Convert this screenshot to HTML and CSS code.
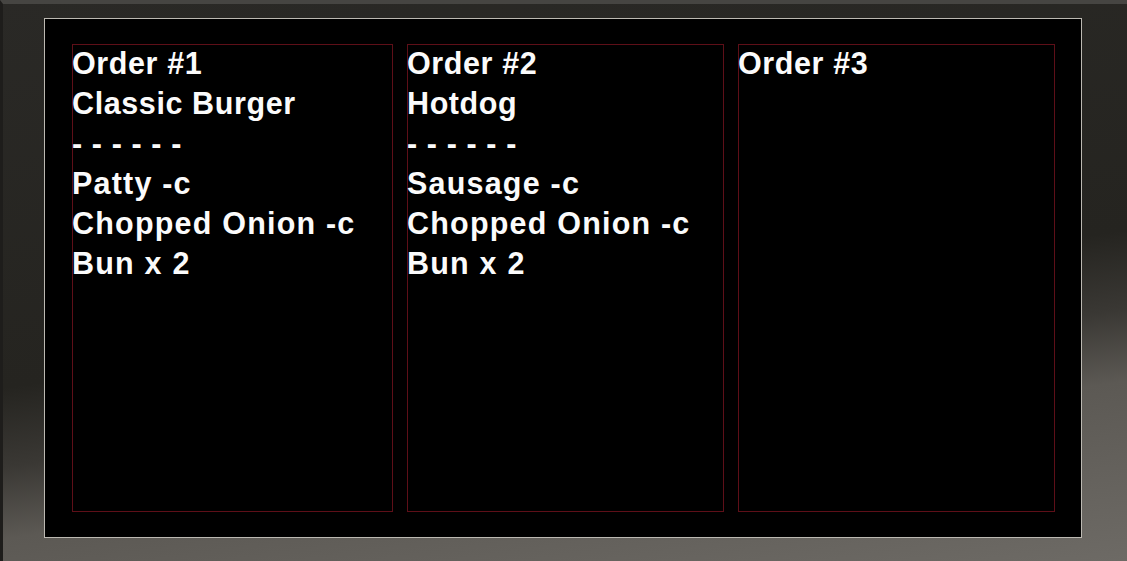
FILE: index.html
```html
<!DOCTYPE html>
<html>
<head>
<meta charset="utf-8">
<link rel="stylesheet" href="styles.css">
</head>
<body>
<div class="bezel">
  <div class="screen">
    <div class="order">
      <div class="line">Order #1</div>
      <div class="line">Classic Burger</div>
      <div class="line">- - - - - -</div>
      <div class="line item">Patty -c</div>
      <div class="line item">Chopped Onion -c</div>
      <div class="line item">Bun x 2</div>
    </div>
    <div class="order">
      <div class="line">Order #2</div>
      <div class="line">Hotdog</div>
      <div class="line">- - - - - -</div>
      <div class="line item">Sausage -c</div>
      <div class="line item">Chopped Onion -c</div>
      <div class="line item">Bun x 2</div>
    </div>
    <div class="order">
      <div class="line">Order #3</div>
    </div>
  </div>
</div>
</body>
</html>
```

FILE: styles.css
```css
html, body {
  margin: 0;
  padding: 0;
}
body {
  width: 1127px;
  height: 561px;
  overflow: hidden;
  background: linear-gradient(172deg, #2a2926 0%, #252420 54%, #3a3834 65%, #5c5954 75%, #6d6a65 100%);
  font-family: "Liberation Sans", Arial, sans-serif;
}
.bezel {
  box-sizing: border-box;
  height: 561px;
  padding: 14px 46px 23px 41px;
  border-top: 4px solid #464542;
  border-left: 3px solid #1e1d1b;
}
.screen {
  box-sizing: border-box;
  width: 1038px;
  height: 520px;
  border: 1px solid #bcb9b2;
  background: #000;
  padding: 25px 26px 25px 27px;
  display: grid;
  grid-template-columns: 321px 317px 317px;
  column-gap: 14px;
}
.order {
  box-sizing: border-box;
  border: 1px solid #5e0f18;
  height: 468px;
  padding: 0;
}
.line {
  color: #fbfbfb;
  font-weight: bold;
  font-size: 30.5px;
  line-height: 40px;
  letter-spacing: 0.6px;
  white-space: nowrap;
  margin-left: -1px;
}
.line:first-child {
  margin-top: -2px;
}
.item {
  letter-spacing: 1.2px;
}
```
